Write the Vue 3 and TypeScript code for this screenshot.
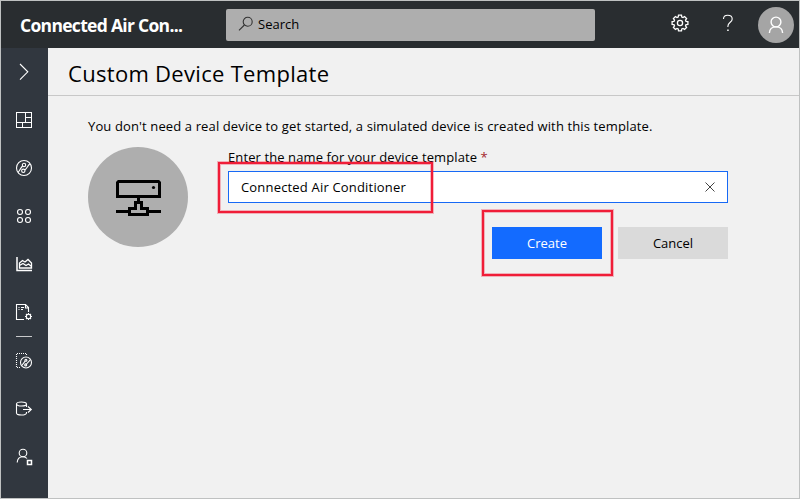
<script setup lang="ts">
import { ref } from 'vue'

const templateName = ref<string>('Connected Air Conditioner')
</script>

<template>
  <div class="app">
    <header class="topbar">
      <div class="brand">Connected Air Con...</div>
      <div class="search">
        <svg class="search-icon" width="16" height="16" viewBox="0 0 16 16">
          <circle cx="9.7" cy="5.7" r="4.5" />
          <path d="M6.4 9L1 14.4" />
        </svg>
        <span>Search</span>
      </div>
      <div class="tools">
        <svg class="gear" width="18" height="18" viewBox="0 0 18 18">
          <path d="M7.5 1.2h3l.3 1.9 1.2.5 1.6-1.1 2 2-1.1 1.6.5 1.2 1.9.3v2.8l-1.9.3-.5 1.2 1.1 1.6-2 2-1.6-1.1-1.2.5-.3 1.9h-3l-.3-1.9-1.2-.5-1.6 1.1-2-2 1.1-1.6-.5-1.2-1.9-.3V7.6l1.9-.3.5-1.2-1.1-1.6 2-2L6 3.6l1.2-.5z" />
          <circle cx="9" cy="9" r="2.6" />
        </svg>
        <svg class="help" width="12" height="18" viewBox="0 0 12 18">
          <path d="M1.500 5C1.500 2.500 3.200 1.200 5.700 1.200S10.200 2.500 10.200 4.900C10.200 8.300 5.900 8.300 5.900 12.300V13" />
          <path d="M5.200 15.500h1.500v1.500h-1.500z" class="dot" />
        </svg>
        <div class="avatar">
          <svg width="16" height="18" viewBox="0 0 16 18">
            <circle cx="8" cy="6" r="4.900" />
            <path d="M1.400 17C1.600 13 4.300 10.900 8 10.900S14.400 13 14.600 17" />
          </svg>
        </div>
      </div>
    </header>

    <div class="body">
      <nav class="sidebar">
        <div class="item">
          <svg viewBox="0 0 18 18"><path d="M5 1l7.800 7.800L5 16.600" /></svg>
        </div>
        <div class="item">
          <svg viewBox="0 0 18 18" class="crisp"><path d="M1.500 1.500h15v15h-15zM1.500 11.500h15M10.500 1.500v10M10.500 6.500h6M7.500 11.500v5" /></svg>
        </div>
        <div class="item">
          <svg viewBox="0 0 18 18">
            <circle cx="9" cy="9" r="7.500" />
            <circle cx="9" cy="6" r="1.700" /><circle cx="8.300" cy="11.800" r="1.700" />
            <path d="M3 13.500C4.500 12 5.500 9 7.600 7M9.800 10.900C12 9.800 12.500 6.500 15 4.700" />
          </svg>
        </div>
        <div class="item">
          <svg viewBox="0 0 18 18">
            <circle cx="5" cy="5" r="2.500" /><circle cx="13" cy="5" r="2.500" />
            <circle cx="5" cy="13" r="2.500" /><circle cx="13" cy="13" r="2.500" />
          </svg>
        </div>
        <div class="item">
          <svg viewBox="0 0 18 18">
            <path class="strong" d="M2 2v13.500h15" />
            <path class="area" d="M4.500 13V8l3-2.500 2.500 1.500 3-2.500 3.500 3.500v5zM4.500 10.500L8 8.500l3 2 2.500-1.500 3 2.500" />
          </svg>
        </div>
        <div class="item">
          <svg viewBox="0 0 18 18">
            <path d="M9 16.500H1.500v-15h9l3 3v4.500M10.500 1.500v3.500h3" />
            <path d="M3.500 4.500h1M6 4.500h3M3.500 6.500h1M6 6.500h2" />
            <circle cx="13.500" cy="13.500" r="2.200" />
            <path d="M13.500 10v1.200M13.500 15.800V17M10 13.500h1.200M15.800 13.500H17M11 11l.9.900M15.100 15.100l.9.900M16 11l-.9.900M11.900 15.100l-.9.900" />
          </svg>
        </div>
        <div class="divider"></div>
        <div class="item">
          <svg viewBox="0 0 18 18">
            <path class="dots" d="M5 15.500H1.500v-14h10v2" />
            <circle cx="11" cy="10.500" r="5.500" />
            <circle cx="10.900" cy="8.200" r="1" /><circle cx="10.700" cy="12.900" r="1" />
            <path d="M6.800 13.500L10.100 9.200M11.500 12l3.800-4.200" />
          </svg>
        </div>
        <div class="item">
          <svg viewBox="0 0 18 18">
            <ellipse cx="6.500" cy="4" rx="5" ry="2" />
            <path d="M1.500 4v9c0 1.200 2.200 2 5 2s5-.8 5-2v-1M11.500 4v3M8 9.500h8.500M13 6.500l3.300 3-3.300 3" />
          </svg>
        </div>
        <div class="item">
          <svg viewBox="0 0 18 18">
            <circle cx="8" cy="5" r="3.800" />
            <path d="M2.200 14.500c.2-3.500 2.600-5.700 5.800-5.700 1.700 0 3 .5 4 1.700" />
            <path class="strong" d="M12.500 12.500h4v4h-4z" />
          </svg>
        </div>
      </nav>

      <main class="content">
        <div class="heading"><h1>Custom Device Template</h1></div>
        <p class="intro">You don't need a real device to get started, a simulated device is created with this template.</p>
        <section class="form">
          <div class="device">
            <svg width="46" height="36" viewBox="0 0 46 36">
              <path d="M3.500 1.500h40l1 1v14h-42v-14z" />
              <path d="M23.500 18v4M20.500 30v-7.500h6V30M20.500 28.500h-6v6h18v-6h-6M1 31.500h12M34 31.500h12" />
              <circle cx="38.500" cy="7.500" r="1.600" />
            </svg>
          </div>
          <div class="fields">
            <label for="template-name">Enter the name for your device template <b>*</b></label>
            <div class="input-box">
              <input id="template-name" v-model="templateName" type="text" />
              <svg width="10" height="10" viewBox="0 0 10 10"><path d="M.5.500l9 9M9.500.500l-9 9" /></svg>
              <i class="mark mark-input"></i>
            </div>
            <div class="actions">
              <button class="create">Create<i class="mark mark-create"></i></button>
              <button class="cancel">Cancel</button>
            </div>
          </div>
        </section>
      </main>
    </div>
  </div>
</template>

<style>
body {
  margin: 0;
  overflow: hidden;
}
</style>

<style scoped>
.app {
  box-sizing: border-box;
  width: 800px;
  height: 499px;
  border: 1px solid #bfc1c1;
  display: flex;
  flex-direction: column;
  background: #f1f1f1;
  color: #000;
  font: 13px/20px "Open Sans", "Noto Sans", sans-serif;
}
svg {
  display: block;
  fill: none;
  stroke: #fff;
  stroke-width: 1.1;
  flex: none;
}
.crisp {
  shape-rendering: crispEdges;
}
.topbar {
  height: 47px;
  flex: none;
  display: flex;
  align-items: center;
  background: #292d30;
}
.brand {
  width: 206px;
  padding-left: 19px;
  color: #fff;
  font-size: 17.5px;
  font-weight: 700;
  letter-spacing: -0.7px;
  white-space: nowrap;
}
.search {
  box-sizing: border-box;
  width: 369px;
  height: 32px;
  padding-left: 12px;
  display: flex;
  align-items: center;
  gap: 4px;
  background: #aeaeae;
  border-radius: 2px;
}
.search span {
  position: relative;
  top: -1px;
}
.search-icon {
  stroke: #333;
  margin-top: -2px;
}
.tools {
  margin-left: auto;
  margin-right: 5px;
  display: flex;
  align-items: center;
}
.gear {
  margin-right: 33px;
  margin-top: -3px;
  stroke-width: 1.3;
}
.help {
  margin-right: 24px;
  margin-top: -3px;
}
.help .dot {
  fill: #fff;
  stroke: none;
}
.avatar {
  width: 36px;
  height: 36px;
  border-radius: 50%;
  background: #a5a5a5;
  display: grid;
  place-items: center;
}
.avatar svg {
  stroke-width: 1.4;
}
.body {
  flex: 1;
  display: flex;
  min-height: 0;
}
.sidebar {
  box-sizing: border-box;
  width: 47px;
  padding-right: 1px;
  flex: none;
  background: #31373f;
}
.item {
  height: 48px;
  display: grid;
  place-items: center;
}
.item svg {
  width: 18px;
  height: 18px;
}
.item .strong {
  stroke-width: 1.5;
}
.item .area {
  stroke-width: 1.3;
}
.item .dots {
  stroke-dasharray: 1 1;
}
.divider {
  width: 16px;
  height: 1px;
  margin: 0 auto;
  background: #c8c9cb;
}
.content {
  flex: 1;
}
.heading {
  height: 47px;
  display: flex;
  align-items: center;
  padding: 0 0 0 20px;
  border-bottom: 1px solid #c8c8c8;
}
h1 {
  margin: 0 0 -3px;
  font-size: 22px;
  font-weight: 400;
  letter-spacing: 0.3px;
  line-height: 30px;
  white-space: nowrap;
}
.intro {
  margin: 20px 0 0 40px;
  letter-spacing: 0.125px;
  white-space: nowrap;
}
.form {
  display: flex;
  gap: 40px;
  margin: 11px 0 0 40px;
}
.device {
  width: 100px;
  height: 100px;
  border-radius: 50%;
  background: #aeaeae;
  display: grid;
  place-items: center;
}
.device svg {
  stroke: #000;
  stroke-width: 3;
  margin-top: 2px;
}
.device circle {
  fill: #000;
  stroke: none;
}
.fields {
  width: 500px;
}
label {
  display: block;
  height: 24px;
  letter-spacing: 0.1px;
  white-space: nowrap;
}
label b {
  color: #a4262c;
  font-weight: 400;
}
.input-box {
  position: relative;
  box-sizing: border-box;
  height: 32px;
  border: 1px solid #1769f5;
  background: #fff;
  display: flex;
  align-items: center;
  padding: 0 12px;
}
input {
  flex: 1;
  min-width: 0;
  padding: 0;
  border: 0;
  outline: 0;
  background: none;
  color: #000;
  font: inherit;
  letter-spacing: 0.18px;
}
.input-box svg {
  stroke: #444;
  stroke-width: 1;
}
.actions {
  display: flex;
  justify-content: flex-end;
  gap: 16px;
  margin-top: 24px;
}
button {
  position: relative;
  width: 110px;
  height: 32px;
  padding: 0;
  border: 0;
  font: inherit;
}
.create {
  background: #136bff;
  color: #fff;
}
.cancel {
  background: #dadada;
  color: #000;
}
.mark {
  position: absolute;
  box-sizing: border-box;
  border: 2px solid #f01d38;
  box-shadow: 0 0 0 1px rgba(240, 29, 56, 0.3), inset 0 0 0 1px rgba(240, 29, 56, 0.3);
  pointer-events: none;
}
.mark-input {
  left: -11px;
  top: -10px;
  width: 215px;
  height: 51px;
}
.mark-create {
  left: -10px;
  top: -17px;
  width: 131px;
  height: 66px;
}
</style>
